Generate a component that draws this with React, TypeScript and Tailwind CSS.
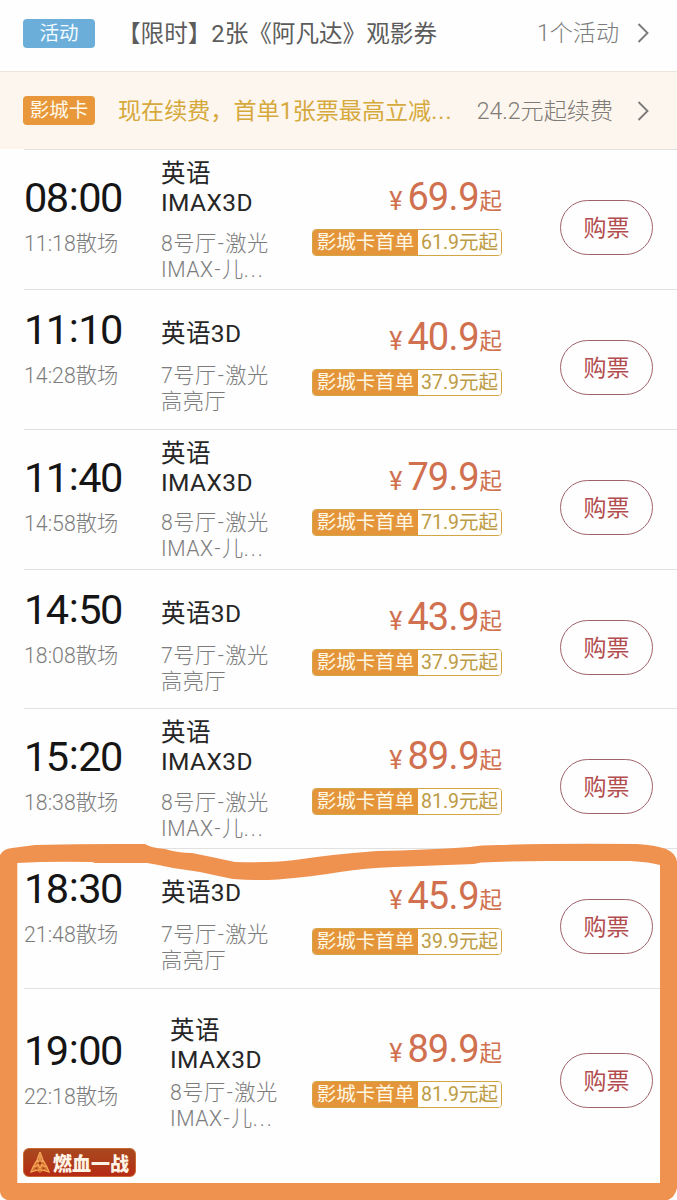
type Show = {
  start: string;
  end: string;
  imax: boolean;
  price: string;
  cardPrice: string;
  tag?: string;
};

const shows: Show[] = [
  { start: "08:00", end: "11:18", imax: true, price: "69.9", cardPrice: "61.9" },
  { start: "11:10", end: "14:28", imax: false, price: "40.9", cardPrice: "37.9" },
  { start: "11:40", end: "14:58", imax: true, price: "79.9", cardPrice: "71.9" },
  { start: "14:50", end: "18:08", imax: false, price: "43.9", cardPrice: "37.9" },
  { start: "15:20", end: "18:38", imax: true, price: "89.9", cardPrice: "81.9" },
  { start: "18:30", end: "21:48", imax: false, price: "45.9", cardPrice: "39.9" },
  { start: "19:00", end: "22:18", imax: true, price: "89.9", cardPrice: "81.9", tag: "燃血一战" },
];

function Chevron() {
  return (
    <svg className="h-[22px] w-3 shrink-0" viewBox="0 0 12 22" fill="none">
      <path d="M1.5 2 L10.5 11 L1.5 20" stroke="#7d7b7a" strokeWidth="1.9" />
    </svg>
  );
}

function Time({ value }: { value: string }) {
  const [h, m] = value.split(":");
  return (
    <div className="h-11 text-[41.5px] leading-[44px] tracking-[-1.5px] text-[#151515]">
      {h}
      <span className="mx-px inline-block -translate-y-[2px]">:</span>
      {m}
    </div>
  );
}

function FilmTag({ label }: { label: string }) {
  return (
    <div className="mt-[38px] -ml-px flex h-[29px] w-[113px] items-center gap-[3px] rounded-[6px] border border-[#c8672e] bg-linear-to-b from-[#a8481f] to-[#b52a14] pl-1.5">
      <svg className="h-[23px] w-5 shrink-0" viewBox="0 0 20 23" fill="none">
        <path d="M10 1 L13 9 L16 15 L19 21 L13 20 L10 22 L7 20 L1 21 L4 14 L7 9 Z" fill="#d9742f" />
        <path
          d="M10 1 L7 9 L3 16 L1 21 L7 19 M10 1 L13 9 L17 16 L19 21 L13 19 M7 9 L12 14 L8 20 M13 9 L8 14 L12 20 M10 5 V12 M4 16 L8 14 M16 16 L12 14"
          stroke="#f3a65a"
          strokeWidth="1.3"
        />
        <path d="M8.5 12 L10 10 L11.5 12 L10 14.5 Z M5 18 L7 16 L7.5 18 Z M15 18 L13 16 L12.5 18 Z" fill="#9c3a17" />
      </svg>
      <span className="pt-[3px] text-[19px] leading-[25px] font-black whitespace-nowrap text-[#fff3e6]">{label}</span>
    </div>
  );
}

function ShowRow({ show }: { show: Show }) {
  const last = Boolean(show.tag);
  const timePad = last ? "pt-[40px]" : show.imax ? "pt-[26px]" : "pt-[18px]";
  const hallPad = last ? "pt-[27px] pl-[9px]" : show.imax ? "pt-[9px]" : "pt-[29px]";
  const hallGap = last ? "mt-[6px]" : show.imax ? "mt-[13.5px]" : "mt-[15px]";
  const [yuan, jiao] = show.price.split(".");

  return (
    <div
      className={`ml-6 flex items-start border-t border-[#e2e1e1] ${last ? "h-[212px]" : "h-[139.85px]"}`}
    >
      <div className={`w-[138px] shrink-0 ${timePad}`}>
        <Time value={show.start} />
        <div className="mt-[11px] text-[21.3px] leading-[26px] font-light text-[#7c7c7c]">{show.end}散场</div>
        {show.tag ? <FilmTag label={show.tag} /> : null}
      </div>

      <div className={`-ml-px w-[152px] shrink-0 whitespace-nowrap ${hallPad}`}>
        <div className="text-[24.5px] leading-[29px] tracking-[0.4px] text-[#262626]">
          {show.imax ? (
            <>
              英语
              <br />
              IMAX3D
            </>
          ) : (
            "英语3D"
          )}
        </div>
        <div className={`text-[21.2px] leading-[26px] font-light tracking-[0.5px] text-[#7c7c7c] ${hallGap}`}>
          {show.imax ? "8号厅" : "7号厅"}
          <span className="mx-px">-</span>激光
          <br />
          {show.imax ? (
            <>
              IMAX<span className="mx-px">-</span>儿<span className="tracking-[2px]">...</span>
            </>
          ) : (
            "高亮厅"
          )}
        </div>
      </div>

      <div className={`flex w-[189px] shrink-0 flex-col items-end ${last ? "pt-[38px]" : "pt-[25px]"}`}>
        <div className="flex h-11 items-baseline leading-[44px] text-[#d0704f]">
          <span className="mr-[5px] text-[25px]">¥</span>
          <span className="text-[38px] tracking-[-1px]">
            {yuan}
            <span className="mx-[0.5px]">.</span>
            {jiao}
          </span>
          <span className="relative -top-px ml-px text-[22.5px]">起</span>
        </div>
        <div className="mt-[10px] flex h-[27px] w-[190px] overflow-hidden rounded-[4px] border border-[#d3a545] text-[19.5px] leading-[25px] whitespace-nowrap">
          <span className="w-[105px] shrink-0 bg-[#e4953a] text-center text-[#fff8e4]">影城卡首单</span>
          <span className="flex-1 bg-[#fffefa] text-center text-[#bd9b45]">{show.cardPrice}元起</span>
        </div>
      </div>

      <button
        className={`ml-[58px] h-[55px] w-[93px] shrink-0 rounded-full border-[1.5px] border-[#a0626a] pt-0.5 text-[23px] leading-none text-[#b24c4e] ${
          last ? "mt-[64px]" : "mt-[50px]"
        }`}
      >
        购票
      </button>
    </div>
  );
}

// Hand-drawn marker loop around the last two shows
function Marker() {
  return (
    <svg className="pointer-events-none absolute inset-0 h-full w-full" viewBox="0 0 677 1200">
      <path
        fill="#ef914f"
        fillRule="evenodd"
        d="M0 855 Q3 849 12 848 L35 845 Q90 843.5 145 844 Q151 848 165 849 Q178 853 192 853 Q212 857 235 862 Q270 863 295 860 Q335 854 377 851 Q425 850 470 847 Q480 845 500 845 Q560 843 637 844 Q655 845 666 849 Q676 853 677 862 V1188 Q675 1197 668 1200 H7 Q1 1198 0 1192 Z M17.3 863 Q50 861 92 862 L95 863 L147 863 Q160 865 173 868 L200 872 Q218 876 233 879 Q265 881 283 879 Q310 877 340 872 Q365 868 394 867 L474 864 L481 862.5 Q515 861 550 861 H630 Q650 862 660 865 V1183 H17.3 Z"
      />
    </svg>
  );
}

export default function App() {
  return (
    <div className="relative h-[1200px] w-[677px] overflow-hidden bg-[#fefefe] font-[Roboto,'Noto_Sans_CJK_SC',sans-serif]">
      <div className="flex h-[71px] items-center pr-7 pb-[5px] pl-[23px] text-[23.1px] whitespace-nowrap">
        <span className="h-[29px] w-[72px] rounded-[4px] bg-[#6caeda] pt-px text-center text-[19.5px] leading-[28px] text-[#f4fbff]">
          活动
        </span>
        <span className="ml-[22px] pt-[3px] text-[23.6px] text-[#5c5c5c]">【限时】2张《阿凡达》观影券</span>
        <span className="mr-[18px] ml-auto pt-[3px] font-light text-[#7c7c7c]">1个活动</span>
        <Chevron />
      </div>

      <div className="flex h-[78px] items-center border-t border-[#ece6df] bg-[#fdf6ee] pr-7 pl-[23px] text-[23.1px] whitespace-nowrap">
        <span className="h-[29px] w-[72px] rounded-[4px] bg-[#e8983a] pt-px text-center text-[19.5px] leading-[28px] text-[#fff8ea]">
          影城卡
        </span>
        <span className="ml-[23px] pt-[3px] text-[#d6a93c]">
          现在续费，首单1张票最高立减<span className="tracking-[1px]">...</span>
        </span>
        <span className="mr-[24px] ml-auto pt-[3px] font-light text-[#7e7a76]">24.2元起续费</span>
        <Chevron />
      </div>

      {shows.map((s) => (
        <ShowRow key={s.start} show={s} />
      ))}

      <Marker />
    </div>
  );
}
